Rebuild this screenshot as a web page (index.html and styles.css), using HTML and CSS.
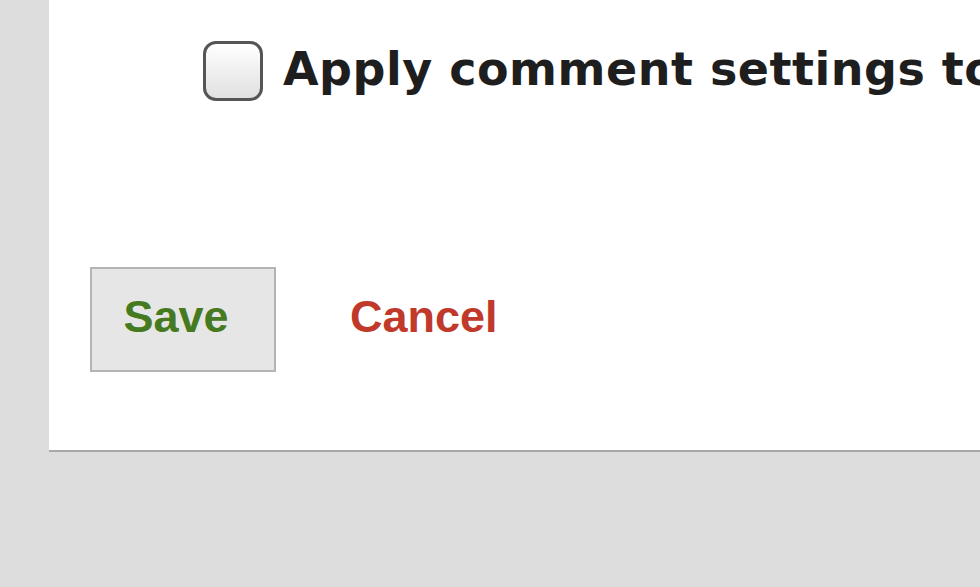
FILE: index.html
```html
<!DOCTYPE html>
<html>
<head>
<meta charset="utf-8">
<link rel="stylesheet" href="styles.css">
</head>
<body>
<div class="panel">
  <label class="option">
    <span class="box"></span>
    <span class="label-text">Apply comment settings to all posts</span>
  </label>
  <div class="actions">
    <button class="save">Save</button>
    <a class="cancel">Cancel</a>
  </div>
</div>
</body>
</html>
```
FILE: styles.css
```css
html, body { margin: 0; padding: 0; }
body {
  background: #dddddd;
  width: 980px;
  height: 587px;
  overflow: hidden;
}
.panel {
  margin-left: 49px;
  width: 1200px;
  height: 452px;
  background: #ffffff;
  border-bottom: 2px solid #a8a8a8;
  box-sizing: border-box;
  padding-top: 41px;
  padding-left: 41px;
  display: flex;
  flex-direction: column;
}
.option {
  display: flex;
  align-items: center;
  gap: 20px;
  padding-left: 113px;
  height: 60px;
}
.box {
  width: 60px;
  height: 60px;
  box-sizing: border-box;
  border: 3px solid #555555;
  border-radius: 13px;
  background: linear-gradient(#ffffff, #e0e0e0);
  flex: none;
}
.label-text {
  font-family: "DejaVu Sans", Verdana, sans-serif;
  font-weight: bold;
  font-size: 46px;
  letter-spacing: 0.5px;
  color: #1e1e1e;
  white-space: nowrap;
  margin-bottom: 5px;
}
.actions {
  margin-top: 166px;
  display: flex;
  align-items: center;
  gap: 74px;
}
.save {
  width: 186px;
  height: 105px;
  box-sizing: border-box;
  border: 2px solid #b4b4b4;
  background: #e6e6e6;
  font-family: "Liberation Sans", Arial, sans-serif;
  font-weight: bold;
  font-size: 45px;
  color: #467a20;
  padding: 0 14px 6px 0;
  margin: 0;
}
.cancel {
  font-family: "Liberation Sans", Arial, sans-serif;
  font-weight: bold;
  font-size: 45px;
  color: #c0392b;
  margin-bottom: 6px;
}
```
